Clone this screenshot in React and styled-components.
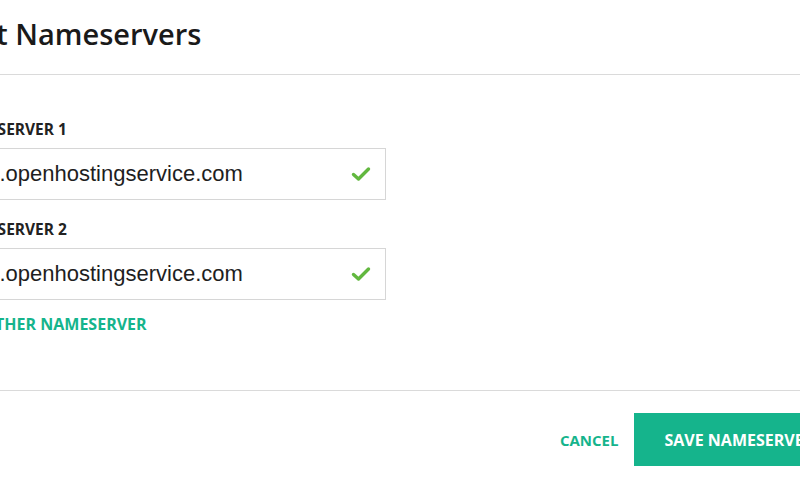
import React from 'react';
import styled, { createGlobalStyle } from 'styled-components';

const GlobalStyle = createGlobalStyle`
  html, body {
    margin: 0;
    padding: 0;
    background: #ffffff;
    overflow: hidden;
  }
  body {
    font-family: "Open Sans", "Liberation Sans", sans-serif;
    -webkit-font-smoothing: antialiased;
  }
`;

const GREEN = '#15b48c';

const Viewport = styled.div`
  width: 800px;
  height: 480px;
  overflow: hidden;
  background: #fff;
`;

const Modal = styled.section`
  margin-left: -84px;
  width: 977px;
  background: #fff;
`;

const Header = styled.header`
  padding: 14px 40px 20px;
  border-bottom: 1px solid #dadada;
`;

const Title = styled.h2`
  margin: 0 0 0 -2px;
  font: 600 29px/40px "Open Sans", sans-serif;
  color: #1a1a1a;
`;

const Body = styled.div`
  padding: 44px 40px 56px;
  border-bottom: 1px solid #dadada;
  display: flex;
  flex-direction: column;
  align-items: flex-start;
`;

const Field = styled.div`
  display: flex;
  flex-direction: column;
  gap: 9px;
  & + & {
    margin-top: 19px;
  }
`;

const Label = styled.label`
  margin-left: -5px;
  font: 700 15.5px/20px "Open Sans", sans-serif;
  color: #222;
  text-transform: uppercase;
`;

const InputBox = styled.div`
  box-sizing: border-box;
  width: 430px;
  height: 52px;
  border: 1px solid #d6d6d6;
  display: flex;
  align-items: center;
  padding: 0 14px 0 7px;
`;

const Value = styled.span`
  flex: 1;
  font: 400 22px "Liberation Sans", Arial, sans-serif;
  color: #1e1e1e;
  white-space: nowrap;
`;

const Check = styled.svg`
  width: 20px;
  height: 16px;
  flex: none;
`;

const AddLink = styled.button`
  margin: 14px 0 0 -11px;
  padding: 0;
  border: 0;
  background: none;
  font: 700 16px/20px "Open Sans", sans-serif;
  color: ${GREEN};
  text-transform: uppercase;
  white-space: nowrap;
  cursor: pointer;
`;

const Footer = styled.footer`
  padding: 22px 40px 22px;
  display: flex;
  justify-content: flex-end;
  align-items: center;
  gap: 16px;
`;

const Button = styled.button`
  height: 53px;
  padding: 0 ${p => (p.$primary ? '30px' : '0')};
  border: 0;
  background: ${p => (p.$primary ? GREEN : 'transparent')};
  color: ${p => (p.$primary ? '#fff' : GREEN)};
  font: 700 ${p => (p.$primary ? '16px' : '15px')}/20px "Open Sans", sans-serif;
  text-transform: uppercase;
  white-space: nowrap;
  cursor: pointer;
`;

const CheckIcon = () => (
  <Check viewBox="0 0 20 16" aria-hidden="true">
    <path
      d="M2.5 8.5 L7.5 13 L17.5 3"
      fill="none"
      stroke="#62b83f"
      strokeWidth="3.4"
      strokeLinecap="round"
      strokeLinejoin="round"
    />
  </Check>
);

const servers = ['ns1.openhostingservice.com', 'ns2.openhostingservice.com'];

export default function App() {
  return (
    <Viewport>
      <GlobalStyle />
      <Modal>
        <Header>
          <Title>Edit Nameservers</Title>
        </Header>
        <Body>
          {servers.map((s, i) => (
            <Field key={s}>
              <Label>Nameserver {i + 1}</Label>
              <InputBox>
                <Value>{s}</Value>
                <CheckIcon />
              </InputBox>
            </Field>
          ))}
          <AddLink>+ Another Nameserver</AddLink>
        </Body>
        <Footer>
          <Button>Cancel</Button>
          <Button $primary>Save Nameservers</Button>
        </Footer>
      </Modal>
    </Viewport>
  );
}
